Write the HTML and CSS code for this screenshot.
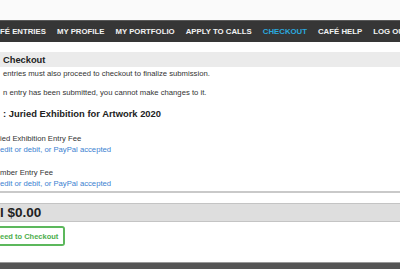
FILE: index.html
```html
<!doctype html>
<html>
  <head>
    <title>CaFÉ - Checkout</title>
    <link rel="stylesheet" href="styles.css">
  </head>
  <body>
    <div class="topbar"></div>

    <nav class="menu">
      <a class="menu-item" href="#">FÉ ENTRIES</a>
      <a class="menu-item" href="#">MY PROFILE</a>
      <a class="menu-item" href="#">MY PORTFOLIO</a>
      <a class="menu-item" href="#">APPLY TO CALLS</a>
      <a class="menu-item active" href="#">CHECKOUT</a>
      <a class="menu-item" href="#">CAFÉ HELP</a>
      <a class="menu-item" href="#">LOG OU</a>
    </nav>

    <main class="content">
      <h2 class="band">Checkout</h2>
      <p class="note first">entries must also proceed to checkout to finalize submission.</p>
      <p class="note">n entry has been submitted, you cannot make changes to it.</p>

      <h3 class="call-title">: Juried Exhibition for Artwork 2020</h3>

      <div class="fee">
        <div class="fee-name">ied Exhibition Entry Fee</div>
        <div class="fee-pay">edit or debit, or PayPal accepted</div>
      </div>
      <div class="fee">
        <div class="fee-name">mber Entry Fee</div>
        <div class="fee-pay">edit or debit, or PayPal accepted</div>
      </div>

      <div class="separator"></div>

      <div class="total">l $0.00</div>

      <button class="proceed">eed to Checkout</button>
    </main>

    <footer class="footer"></footer>
  </body>
</html>
```

FILE: styles.css
```css
* {
  box-sizing: border-box;
  margin: 0;
  padding: 0;
}

html,
body {
  height: 100%;
  overflow: hidden;
}

body {
  font-family: 'Liberation Sans', Arial, Helvetica, sans-serif;
  background: #fff;
  color: #333;
  display: flex;
  flex-direction: column;
}

.topbar {
  height: 20px;
  background: #fafafa;
}

.menu {
  height: 22px;
  background: #363636;
  border-top: 1px solid #5a5a5a;
  display: flex;
  align-items: center;
  gap: 11px;
  padding-left: 0;
  white-space: nowrap;
  overflow: hidden;
}
.menu-item {
  color: #f2f2f2;
  text-decoration: none;
  font-weight: bold;
  font-size: 7.8px;
  line-height: 21px;
}
.menu-item.active {
  color: #2ba8de;
}

.content {
  padding-top: 10px;
  flex: 1;
}

.band {
  height: 15px;
  line-height: 16px;
  background: #ebebeb;
  font-size: 9.3px;
  font-weight: bold;
  color: #222;
  padding-left: 3px;
}

.note {
  font-size: 7.7px;
  line-height: 10px;
  margin-top: 9px;
  padding-left: 3px;
  color: #333;
}
.note.first {
  margin-top: 2px;
}

.call-title {
  font-size: 9.4px;
  line-height: 12px;
  font-weight: bold;
  color: #222;
  margin-top: 10px;
  padding-left: 3px;
}

.fee {
  margin-top: 14px;
  font-size: 7.7px;
  line-height: 10px;
}
.fee + .fee {
  margin-top: 13px;
}
.fee-name {
  color: #333;
}
.fee-pay {
  color: #3b7fd1;
  margin-top: 1px;
}

.separator {
  height: 2px;
  background: #c9c9c9;
  margin-top: 2px;
}

.total {
  margin-top: 10px;
  height: 19px;
  line-height: 17px;
  background: #dedede;
  border-top: 1px solid #c4c4c4;
  border-bottom: 1px solid #c4c4c4;
  font-size: 13.5px;
  font-weight: bold;
  color: #222;
}

.proceed {
  display: block;
  margin-top: 4px;
  height: 20px;
  padding: 0 5px 0 0;
  background: #fff;
  border: 2px solid #5cb85c;
  border-left: none;
  border-radius: 0 3px 3px 0;
  color: #4cae4c;
  font-family: inherit;
  font-size: 7.5px;
  font-weight: bold;
}

.footer {
  height: 7px;
  background: #555;
  border-top: 1px solid #999;
}
```
